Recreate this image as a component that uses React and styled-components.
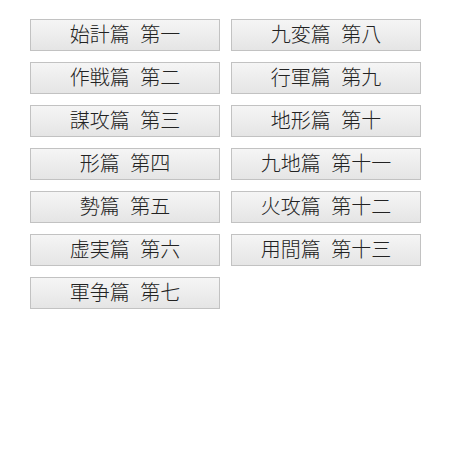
import React from "react";
import styled, { createGlobalStyle } from "styled-components";

const chapters = [
  "始計篇 第一",
  "九変篇 第八",
  "作戦篇 第二",
  "行軍篇 第九",
  "謀攻篇 第三",
  "地形篇 第十",
  "形篇 第四",
  "九地篇 第十一",
  "勢篇 第五",
  "火攻篇 第十二",
  "虚実篇 第六",
  "用間篇 第十三",
  "軍争篇 第七",
];

const GlobalStyle = createGlobalStyle`
  body {
    margin: 0;
    background: #fff;
    font-family: "Noto Sans CJK JP", "Noto Sans", sans-serif;
  }
`;

const Grid = styled.div`
  display: grid;
  grid-template-columns: 190px 190px;
  column-gap: 11px;
  row-gap: 11px;
  padding: 19px 0 0 30px;
`;

const Chapter = styled.button`
  height: 32px;
  box-sizing: border-box;
  border: 1px solid #c2c2c2;
  background: linear-gradient(#f5f5f5, #e5e5e5);
  color: #222;
  font-family: inherit;
  font-size: 20px;
  font-weight: 300;
  line-height: 28px;
  word-spacing: 6px;
  padding: 0 0 2px;
  border-radius: 0;
  white-space: pre;
  cursor: pointer;
`;

export default function App() {
  return (
    <>
      <GlobalStyle />
      <Grid>
        {chapters.map((c) => (
          <Chapter key={c}>{c}</Chapter>
        ))}
      </Grid>
    </>
  );
}
